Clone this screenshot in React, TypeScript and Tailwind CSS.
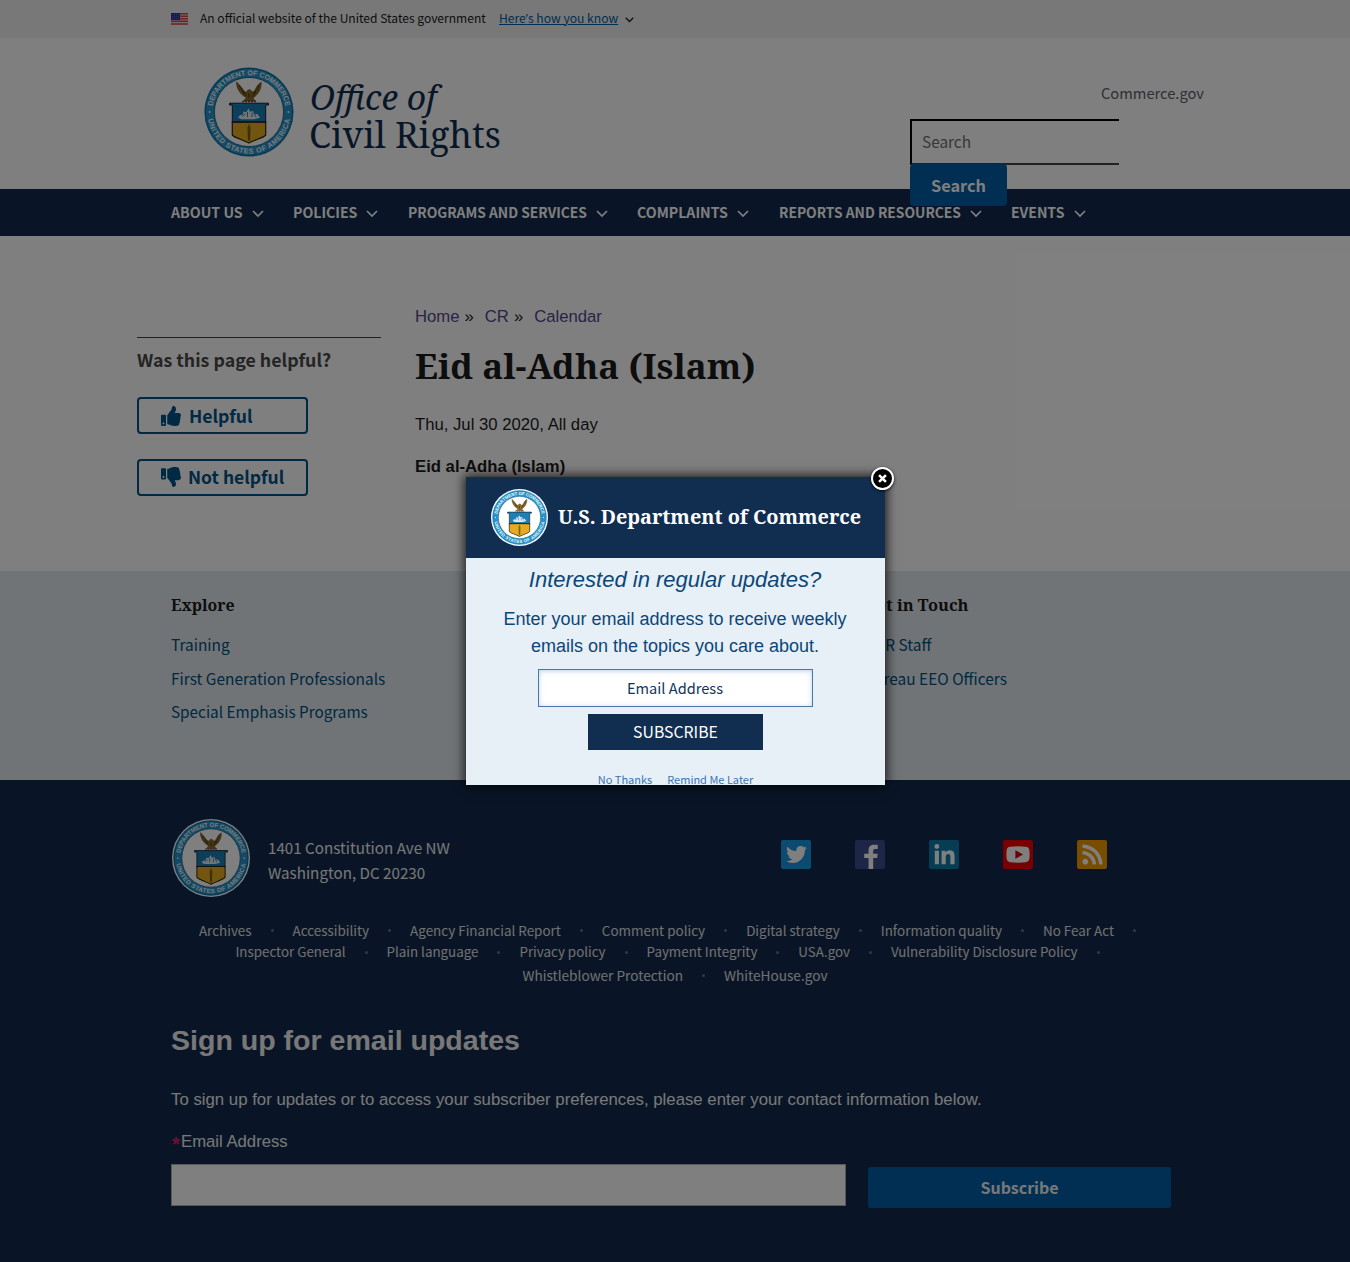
import React, { useId } from 'react';
import { FaThumbsUp, FaThumbsDown, FaTwitter, FaLinkedinIn, FaRss } from 'react-icons/fa';

const navItems = [
  { label: 'ABOUT US', width: 'w-[122px]', text: 'w-[72px]', size: 'text-[14.2px]' },
  { label: 'POLICIES', width: 'w-[115px]', text: 'w-[64px]', size: 'text-[14.1px]' },
  { label: 'PROGRAMS AND SERVICES', width: 'w-[229px]', text: 'w-[179px]', size: 'text-[13.83px]' },
  { label: 'COMPLAINTS', width: 'w-[142px]', text: 'w-[91px]', size: 'text-[14.18px]' },
  { label: 'REPORTS AND RESOURCES', width: 'w-[232px]', text: 'w-[182px]', size: 'text-[13.8px]' },
  { label: 'EVENTS', width: 'w-[90px]', text: 'w-[54px]', size: 'text-[14px]' },
];

const footerRows = [
  { size: 'text-[13.44px] leading-[22px]', links: ['Archives', 'Accessibility', 'Agency Financial Report', 'Comment policy', 'Digital strategy', 'Information quality', 'No Fear Act'] },
  { size: 'text-[13.36px] leading-[22px]', links: ['Inspector General', 'Plain language', 'Privacy policy', 'Payment Integrity', 'USA.gov', 'Vulnerability Disclosure Policy'] },
  { size: 'text-[13.65px] leading-[24px]', links: ['Whistleblower Protection', 'WhiteHouse.gov'] },
];

function Chevron({ className = '' }: { className?: string }) {
  return (
    <svg viewBox="0 0 12 8" fill="none" stroke="currentColor" strokeWidth="1.7" className={className}>
      <path d="M1 1l5 5 5-5" />
    </svg>
  );
}

function Seal({ className = '', rim = '#1b87bd' }: { className?: string; rim?: string }) {
  const id = useId();
  return (
    <svg viewBox="0 0 90 90" className={className}>
      <defs>
        <path id={`${id}t`} d="M8.2 45a36.8 36.8 0 0 1 73.6 0" />
        <path id={`${id}b`} d="M3.4 45a41.6 41.6 0 0 0 83.2 0" />
      </defs>
      <circle cx="45" cy="45" r="44.6" fill={rim} />
      <circle cx="45" cy="45" r="43.6" fill="#2793c8" stroke="#12628f" strokeWidth="0.8" />
      <circle cx="45" cy="45" r="34.6" fill="#fff" stroke="#155f8a" strokeWidth="0.9" />
      <g fill="#eef7fb" className="font-['Liberation_Sans'] text-[7.2px] font-bold">
        <text textAnchor="middle" textLength="104"><textPath href={`#${id}t`} startOffset="50%" textLength="104">DEPARTMENT OF COMMERCE</textPath></text>
        <text textAnchor="middle" textLength="116"><textPath href={`#${id}b`} startOffset="50%" textLength="116">UNITED STATES OF AMERICA</textPath></text>
      </g>
      <circle cx="5.6" cy="45" r="1" fill="#fff" />
      <circle cx="84.400" cy="45" r="1" fill="#fff" />
      <path d="M32.500 15c1.500 1.500 4.500 4 7 8.500 1.200 1.200 2 1.700 3.200 1.800.2-1.600 1.200-2.500 2.600-2.500 1.300 0 2.200.8 2.600 2.300 1.400-.2 2.200-.8 3-1.800 2-4 3.500-6.500 6.300-8 .3 5.500-2 10.500-6 14l-2.400 1.700 2.600 3H39.500l3-3.500-2.800-1.400c-4.200-3.500-7-7.600-7.200-14.100z" fill="#8f6d26" stroke="#4a3913" strokeWidth="0.6" />
      <path d="M35 18.500c2 3 4 6 7 8.500M55 18.500c-1.500 4-3.500 6.500-6.500 8.500M45 26v5M38 24l4 5M52 25l-4 5" stroke="#3f300f" strokeWidth="0.9" fill="none" />
      <path d="M38 34.600h14" stroke="#8c2f2f" strokeWidth="1.300" strokeDasharray="2 1" />
      <path d="M25.500 36.200h39v1.800h-2.800v18H28.300V38h-2.800z" fill="#1d7fb4" stroke="#16212a" strokeWidth="1" />
      <path d="M28.300 55h33.400v13c-2.500 3-10 4.500-16.700 8-6.700-3.500-14.200-5-16.700-8z" fill="#e5ab1f" stroke="#2a2412" strokeWidth="1.200" />
      <path d="M28.300 55h33.400" stroke="#222" strokeWidth="1.300" />
      <path d="M34 50.500l2-2.500 2.500.3 1-3.500 3 .2 2-3.500 1.500 3.200 3-.8 1 3 3.500.2 2.500 3.600-6 1.500H37z" fill="#dcecf2" />
      <path d="M38.500 49.500l3-3M43.500 50v-5M48 50v-4.500M52 50l-1.500-3" stroke="#1d5f86" strokeWidth="0.8" />
      <path d="M45 57v17M44 60h2l-.4 13h-1.200z" stroke="#6f5312" strokeWidth="0.9" fill="#a67c14" />
    </svg>
  );
}

function Flag() {
  return (
    <svg viewBox="0 0 17 12" className="h-3 w-[17px]">
      <rect width="17" height="12" fill="#f3d8d0" />
      <path d="M0 .75h17M0 3.250h17M0 5.750h17M0 8.250h17M0 11h17" stroke="#d5464f" strokeWidth="1.300" />
      <rect width="9" height="7" fill="#27409c" />
      <path d="M1 1.500h7M1 3.500h7M1 5.500h7" stroke="#6a7ac0" strokeWidth="0.6" strokeDasharray="1 1" />
    </svg>
  );
}

function Social() {
  const box = 'flex h-[29px] w-[30px] items-center justify-center overflow-hidden rounded-[2px] text-white';
  return (
    <div className="flex gap-11">
      <span className={`${box} bg-[#1b95e0]`}><FaTwitter className="size-[21px]" /></span>
      <span className={`${box} bg-[#3a4c8c]`}>
        <svg viewBox="0 0 30 30" className="size-full" fill="currentColor">
          <path d="M13.500 30V18.500H9v-4.300h4.500v-3.500C13.500 6.800 15.800 5 19.300 5H23v4.200h-2.500c-1.700 0-2.200.8-2.200 2.200v2.800H23l-.6 4.300h-4.100V30z" />
        </svg>
      </span>
      <span className={`${box} bg-[#0c7bab]`}><FaLinkedinIn className="mt-[2px] size-[23px]" /></span>
      <span className={`${box} bg-[#f00000]`}>
        <svg viewBox="0 0 30 30" className="size-full">
          <path d="M7 7q8-1 16 0 3.500.3 3.800 4 .4 4 0 8-.3 3.700-3.800 4-8 1-16 0-3.500-.3-3.800-4-.4-4 0-8Q3.500 7.300 7 7z" fill="#fff" />
          <path d="M12.300 10.500l8 4.500-8 4.500z" fill="#d8000c" />
        </svg>
      </span>
      <span className={`${box} bg-[#f29a00]`}><FaRss className="size-[23px]" /></span>
    </div>
  );
}

function SignupModal() {
  return (
    <div role="dialog" className="absolute left-[466px] top-[477px] h-[308px] w-[419px] bg-[#e7eff7] shadow-[0_0_10px_2px_rgba(0,0,0,0.75)]">
      <button aria-label="Close" className="absolute -right-[9px] -top-[10px] flex size-[23px] items-center justify-center rounded-full border-2 border-white bg-black shadow-[0_1px_3px_rgba(0,0,0,0.8)]">
        <svg viewBox="0 0 10 10" className="size-[9px]" stroke="#fff" strokeWidth="2.800"><path d="M1.200 1.200l7.600 7.600M8.800 1.200L1.200 8.800" /></svg>
      </button>
      <div className="flex h-[81px] items-center bg-[#112e51] pl-[25px]">
        <div className="size-[57px] rounded-full bg-white p-px"><Seal className="size-[55px]" rim="#8fd0ef" /></div>
        <span className="ml-[10px] whitespace-nowrap pb-px font-['Noto_Serif','DejaVu_Serif_Condensed',serif] text-[19.84px] font-bold text-white">U.S. Department of Commerce</span>
      </div>
      <div className="flex h-[227px] flex-col items-center overflow-hidden text-center text-[#0b4778]">
        <p className="mt-[8px] pr-px font-['Liberation_Sans',sans-serif] text-[22px] italic leading-[28px]">Interested in regular updates?</p>
        <p className="mt-3 w-[361px] pr-px font-['Liberation_Sans',sans-serif] text-[18px] leading-[27px]">Enter your email address to receive weekly emails on the topics you care about.</p>
        <div className="mt-[9px] flex h-[38px] w-[275px] shrink-0 items-center justify-center border border-[#4a77a6] bg-white pr-px text-[14.6px] text-[#12355c] shadow-[inset_0_1px_5px_rgba(80,140,200,0.4)]">Email Address</div>
        <button className="mt-[7px] h-9 w-[175px] shrink-0 bg-[#112e51] text-[15.8px] leading-[34px] text-white">SUBSCRIBE</button>
        <div className="mt-[20px] flex gap-[15px] text-[11px] leading-[18px] text-[#3b76b1]"><span>No Thanks</span><span>Remind Me Later</span></div>
      </div>
    </div>
  );
}

export default function App() {
  return (
    <div className="relative h-[1262px] w-[1350px] overflow-hidden bg-white font-['Noto_Sans_CJK_SC',sans-serif] text-[#1b1b1b]">
      <div className="flex h-[38px] items-center bg-[#f0f0f0] pb-[2px] pl-[171px]">
        <span className="mt-[2px]"><Flag /></span>
        <span className="ml-3 w-[299px] text-[12.06px] leading-[18px]">An official website of the United States government</span>
        <span className="w-[120px] whitespace-nowrap text-[12.14px] leading-[18px] text-[#005ea2] underline">Here<span className="font-['Open_Sans']">’</span>s how you know</span>
        <Chevron className="ml-[6px] mt-[3px] h-[6px] w-[9px]" />
      </div>

      <header className="relative z-10 flex h-[151px] pl-[204px]">
        <Seal className="mt-[29px] size-[90px]" />
        <div className="ml-4 mt-[40px] w-[600px] whitespace-nowrap font-['Noto_Serif','DejaVu_Serif_Condensed',serif] text-[35.85px] text-[#112e51]">
          <p className="text-[33.7px] italic leading-[38px]">Office of</p>
          <p className="-ml-px leading-[38px]">Civil Rights</p>
        </div>
        <div className="w-[294px]">
          <p className="mt-[44px] text-right text-[14.7px] leading-[22px] text-[#5b616b]">Commerce.gov</p>
          <div className="mt-[15px] h-[46px] w-[209px] border-b-2 border-l-2 border-t-2 border-b-[#444] border-l-black border-t-black pl-[10px] text-[15.36px] leading-[40px] text-[#6f6f6f]">Search</div>
          <button className="-mt-px block h-[42px] w-[97px] rounded bg-[#005ea6] text-[16.3px] font-bold leading-[41px] text-white">Search</button>
        </div>
      </header>

      <nav className="flex h-[47px] items-center bg-[#122a4d] pb-px pl-[171px] font-bold leading-[20px] text-white">
        {navItems.map((n) => (
          <div key={n.label} className={`flex shrink-0 items-center ${n.width}`}>
            <span className={`whitespace-nowrap leading-[20px] ${n.text} ${n.size}`}>{n.label}</span>
            <Chevron className="ml-[9px] mt-[3px] h-2 w-3" />
          </div>
        ))}
      </nav>

      <main className="flex h-[335px] pl-[137px]">
        <aside className="mt-[101px] w-[244px] border-t border-[#444]">
          <h2 className="mt-[8px] text-[17.8px] font-bold leading-[26px] text-[#494949]">Was this page helpful?</h2>
          <div className="mt-[25px] flex h-[37px] w-[171px] items-center rounded border-2 border-[#005287] pl-[22px] text-[17.6px] font-bold text-[#005287]">
            <FaThumbsUp className="mr-2 size-5" /><span className="leading-[30px]">Helpful</span>
          </div>
          <div className="mt-[25px] flex h-[37px] w-[171px] items-center rounded border-2 border-[#005287] pb-[2px] pl-[22px] text-[17.5px] font-bold text-[#005287]">
            <FaThumbsDown className="mr-[7px] size-5" /><span className="leading-[30px]">Not helpful</span>
          </div>
        </aside>
        <article className="ml-[34px] mt-[70px] font-['Liberation_Sans',sans-serif] text-[16.7px]">
          <p className="flex leading-[22px] text-[#54478c]">
            Home <span className="ml-[5px] mr-[11px] text-[#1b1b1b]">»</span> CR <span className="ml-[5px] mr-[11px] text-[#1b1b1b]">»</span> Calendar
          </p>
          <h1 className="mt-[14px] h-[48px] whitespace-nowrap font-['Noto_Serif','DejaVu_Serif_Condensed',serif] text-[35.1px] font-bold leading-[46px]">Eid al-Adha (Islam)</h1>
          <p className="mt-[24px] leading-[22px]">Thu, Jul 30 2020, All day</p>
          <p className="mt-5 font-bold leading-[22px]">Eid al-Adha (Islam)</p>
        </article>
      </main>

      <section className="flex h-[209px] bg-[#e0e8ee] pl-[171px] text-[15.43px] leading-[22px] text-[#00507f]">
        <div className="w-[693px]">
          <h3 className="mt-[22px] leading-6 font-['Noto_Serif','DejaVu_Serif_Condensed',serif] text-[15.9px] font-bold text-[#1b1b1b]">Explore</h3>
          <p className="mt-[16px]">Training</p>
          <p className="mt-[12px]">First Generation Professionals</p>
          <p className="mt-[11px] text-[15.3px]">Special Emphasis Programs</p>
        </div>
        <div className="whitespace-nowrap">
          <h3 className="mt-[22px] leading-6 font-['Noto_Serif','DejaVu_Serif_Condensed',serif] text-[16.4px] font-bold text-[#1b1b1b]">Get in Touch</h3>
          <p className="mt-[16px]">OCR Staff</p>
          <p className="mt-[12px]">Bureau EEO Officers</p>
        </div>
      </section>

      <footer className="h-[482px] bg-[#122a4d] text-white">
        <div className="flex h-[139px] pl-[172px]">
          <div className="mt-[39px] size-[78px] rounded-full bg-white p-px"><Seal className="size-[76px]" /></div>
          <address className="ml-[18px] mt-[55px] w-[513px] text-[15.2px] not-italic leading-[25px] text-[#f0f0f0]">1401 Constitution Ave NW<br />Washington, DC 20230</address>
          <div className="mt-[60px]"><Social /></div>
        </div>
        <div className="h-[69px] text-[#e0e0e0]">
          {footerRows.map((row, r) => (
            <div key={r} className={`flex justify-center ${row.size}`}>
              {row.links.map((t, i) => (
                <span key={t} className="flex items-center whitespace-nowrap">
                  {t}
                  {(r < 2 || i < row.links.length - 1) && (
                    <span className={i === row.links.length - 1 ? 'ml-[19px] mr-[15px] mt-px size-[3px] rounded-full bg-[#5a7390]' : 'mx-[19px] mt-px size-[3px] rounded-full bg-[#5a7390]'} />
                  )}
                </span>
              ))}
            </div>
          ))}
        </div>
        <div className="pl-[171px] font-['Liberation_Sans',sans-serif] text-[16.79px] text-[#f0f0f0]">
          <h2 className="mt-[34px] text-[28.55px] font-bold leading-[36px]">Sign up for email updates</h2>
          <p className="mt-[31px] leading-[22px]">To sign up for updates or to access your subscriber preferences, please enter your contact information below.</p>
          <p className="mt-[20px] flex h-[25px] leading-[22px]"><span className="w-[10px] pl-px pt-[2px] text-[20px] font-bold text-[#e31c5d]">*</span><span className="text-[16.7px]">Email Address</span></p>
          <div className="mt-[8px] flex">
            <div className="h-[42px] w-[675px] border border-[#aeb0b5] bg-white" />
            <button className="ml-[22px] mt-[3px] h-[41px] w-[303px] rounded-[3px] bg-[#005ea6] pb-px font-['Noto_Sans_CJK_SC',sans-serif] text-[15.96px] font-bold leading-[38px]">Subscribe</button>
          </div>
        </div>
      </footer>

      <div className="absolute inset-0 z-20 bg-black/50">
        <SignupModal />
      </div>
    </div>
  );
}
